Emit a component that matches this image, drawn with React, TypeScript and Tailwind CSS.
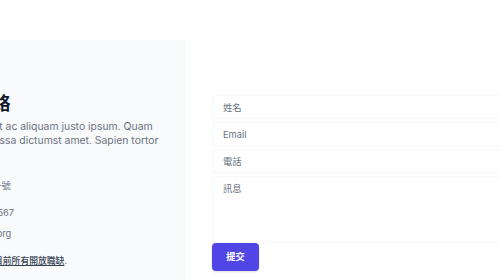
import React from 'react'
import { Building2, Phone, Mail } from 'lucide-react'

const font = { fontFamily: 'Inter, "Noto Sans CJK TC", sans-serif' }

const fieldClass =
  'block w-full rounded-[3px] border border-[#f7f8fa] px-[10px] text-[9.3px] text-gray-900 placeholder:text-gray-500 focus:outline-none'

export default function App() {
  return (
    <div className="flex h-[280px] w-[500px] overflow-hidden bg-white" style={font}>
      {/* Left: contact info */}
      <div className="mt-[40px] w-[185px] shrink-0 bg-gray-50 pt-[53px]">
        <div className="ml-[-94px] w-[268px]">
          <h2 className="whitespace-nowrap text-[17.8px] font-bold leading-[21px] tracking-tight text-gray-900">
            請與我們聯絡
          </h2>
          <p className="mt-[6px] text-[10.4px] leading-[14px] text-gray-500">
            Nullam risus blandit ac aliquam justo ipsum. Quam mauris volutpat massa dictumst amet.
            Sapien tortor lacus arcu.
          </p>
          <dl className="mt-[17px] whitespace-nowrap text-[9.3px] leading-[14px] text-gray-500">
            <dt className="sr-only">地址</dt>
            <dd className="flex items-center">
              <Building2 className="h-[14px] w-[14px] shrink-0 text-gray-400" />
              <span className="ml-[7px]">台北市民生東路一號</span>
            </dd>
            <dt className="sr-only">電話</dt>
            <dd className="mt-[13px] flex items-center">
              <Phone className="h-[14px] w-[14px] shrink-0 text-gray-400" />
              <span className="ml-[7px]">+1 (555) 1234-4567</span>
            </dd>
            <dt className="sr-only">Email</dt>
            <dd className="mt-[7px] flex items-center">
              <Mail className="h-[14px] w-[14px] shrink-0 text-gray-400" />
              <span className="ml-[7px]">hello@example.org</span>
            </dd>
          </dl>
          <p className="mt-[13px] whitespace-nowrap text-[8.8px] leading-[14px] text-gray-500">
            在找工作嗎？
            <a href="#" className="font-medium text-gray-700 underline">
              查看我們目前所有開放職缺
            </a>
            .
          </p>
        </div>
      </div>

      {/* Right: form */}
      <div className="flex-1 pl-[27px] pt-[95px]">
        <form className="flex w-[320px] flex-col gap-[3px]">
          <input type="text" placeholder="姓名" className={`${fieldClass} h-[24px]`} />
          <input type="email" placeholder="Email" className={`${fieldClass} h-[24px]`} />
          <input type="tel" placeholder="電話" className={`${fieldClass} h-[24px]`} />
          <textarea
            placeholder="訊息"
            className={`${fieldClass} h-[67px] resize-none pt-[5px] leading-[14px]`}
          />
          <button
            type="submit"
            className="mt-[-3px] flex h-[28px] w-[47px] items-center justify-center self-start rounded-[4px] bg-[#4f46e5] text-[9.3px] font-semibold text-white shadow-sm"
          >
            提交
          </button>
        </form>
      </div>
    </div>
  )
}
